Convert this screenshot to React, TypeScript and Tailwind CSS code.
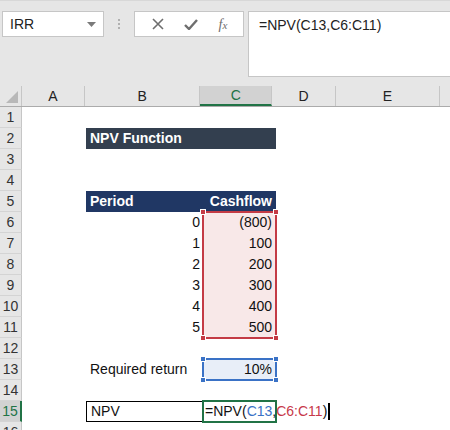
import { ReactNode } from "react";

const cols = [
    { key: "A", w: 64 },
    { key: "B", w: 117 },
    { key: "C", w: 73 },
    { key: "D", w: 64 },
    { key: "E", w: 106 },
    { key: "F", w: 10 },
];

type Cell = { text?: ReactNode; cls?: string };
type Row = { [k: string]: Cell };

const rows: Row[] = [
    {},
    {
        B: { text: "NPV Function", cls: "bg-[#333f4f] text-white font-bold pl-[4px]" },
        C: { cls: "bg-[#333f4f]" },
    },
    {},
    {},
    {
        B: { text: "Period", cls: "bg-[#203764] text-white font-bold pl-[4px]" },
        C: { text: "Cashflow", cls: "bg-[#203764] text-white font-bold justify-end pr-[4px]" },
    },
    ...["(800)", "100", "200", "300", "400", "500"].map((v, i) => ({
        B: { text: String(i), cls: "justify-end pr-[3px]" },
        C: { text: v, cls: "justify-end pr-[4px] bg-[#f8e8e8]" },
    })),
    {},
    {
        B: { text: "Required return", cls: "pl-[4px]" },
        C: { text: "10%", cls: "justify-end pr-[4px] bg-[#e8eef8]" },
    },
    {},
    {
        B: { text: "NPV", cls: "pl-[4px] border border-black" },
        C: {
            text: (
                <span className="whitespace-nowrap flex items-center">
                    =NPV(<span className="text-[#3a72c6]">C13</span>,<span className="text-[#c7394a]">C6:C11</span>)
                    <span className="inline-block w-[2px] h-[17px] bg-black ml-[1px]"></span>
                </span>
            ),
            cls: "pl-[2px] overflow-visible z-10",
        },
    },
    {},
];

function Corners({ color }: { color: string }) {
    const base = "absolute w-[6px] h-[6px] border border-white";
    return <>
        <div className={`${base} -left-[4px] -top-[4px] ${color}`}></div>
        <div className={`${base} -right-[4px] -top-[4px] ${color}`}></div>
        <div className={`${base} -left-[4px] -bottom-[4px] ${color}`}></div>
        <div className={`${base} -right-[4px] -bottom-[4px] ${color}`}></div>
    </>
}

export default function App() {
    return <div className="w-[450px] h-[430px] overflow-hidden bg-white text-[14px] text-[#111]" style={{ fontFamily: "'Liberation Sans', Arial, sans-serif" }}>
        {/* formula bar */}
        <div className="h-[86px] bg-[#e6e6e6] border-t border-[#d8d8d8] flex items-start pt-[10px] pl-[2px]">
            <div className="w-[102px] h-[26px] bg-white border border-[#c6c6c6] flex items-center justify-between pl-[7px] pr-[7px] text-[#222]">
                <span>IRR</span>
                <svg width="9" height="5" viewBox="0 0 9 5"><path d="M0 0h9L4.5 5z" fill="#7a7a7a" /></svg>
            </div>
            <div className="w-[30px] h-[26px] flex flex-col items-center justify-center gap-[2px]">
                <div className="w-[2px] h-[2px] bg-[#b0b0b0]"></div>
                <div className="w-[2px] h-[2px] bg-[#b0b0b0]"></div>
                <div className="w-[2px] h-[2px] bg-[#b0b0b0]"></div>
            </div>
            <div className="w-[110px] h-[26px] bg-white border border-[#c6c6c6] flex items-center">
                <div className="w-[40px] flex justify-center pl-[6px]">
                    <svg width="12" height="12" viewBox="0 0 12 12"><path d="M1 1l10 10M11 1L1 11" stroke="#6e6e6e" strokeWidth="1.6" /></svg>
                </div>
                <div className="w-[32px] flex justify-center">
                    <svg width="14" height="11" viewBox="0 0 14 11"><path d="M1 6l4 4 8-9" stroke="#6e6e6e" strokeWidth="2.4" fill="none" /></svg>
                </div>
                <div className="w-[32px] flex justify-center italic text-[#6e6e6e] text-[14px]" style={{ fontFamily: "'Liberation Serif', serif" }}>
                    f<span className="text-[11px] mt-[3px]">x</span>
                </div>
            </div>
            <div className="ml-[4px] flex-1 h-[66px] bg-white border border-[#c6c6c6] border-r-0 pl-[10px] pt-[3px] text-[#222]">
                =NPV(C13,C6:C11)
            </div>
        </div>

        {/* column headers */}
        <div className="flex h-[21px] bg-[#e6e6e6] border-b border-[#ababab]">
            <div className="w-[22px] h-full border-r border-[#c6c6c6] relative flex items-end justify-end p-[3px]">
                <svg width="12" height="12" viewBox="0 0 12 12"><path d="M12 0v12H0z" fill="#b8b8b8" /></svg>
            </div>
            {cols.map(c => (
                <div key={c.key} style={{ width: c.w }} className={`h-full flex items-center justify-center text-[#222] border-r ${c.key === "F" ? "border-r-0" : "border-[#c6c6c6]"} ${c.key === "C" ? "bg-[#d2d2d2] border-b-2 border-b-[#217346] text-[#217346]" : ""}`}>
                    {c.key === "F" ? "" : c.key}
                </div>
            ))}
        </div>

        {/* grid */}
        <div className="relative">
            {rows.map((r, i) => (
                <div key={i} className="flex h-[21px]">
                    <div className={`w-[22px] shrink-0 h-full flex items-center justify-center border-b border-[#d4d4d4] ${i === 14 ? "bg-[#d2d2d2] border-r-2 border-r-[#217346] text-[#217346]" : "bg-[#e6e6e6] border-r border-r-[#c6c6c6] text-[#333]"}`}>
                        {i + 1}
                    </div>
                    {cols.map(c => {
                        const cell = r[c.key] || {};
                        return <div key={c.key} style={{ width: c.w }} className={`shrink-0 h-full flex items-center ${cell.cls || ""}`}>
                            {cell.text}
                        </div>
                    })}
                </div>
            ))}

            {/* C6:C11 range highlight */}
            <div className="absolute left-[202px] top-[104px] w-[75px] h-[128px] border-2 border-[#c43b45] pointer-events-none">
                <Corners color="bg-[#c43b45]" />
            </div>
            {/* C13 range highlight */}
            <div className="absolute left-[202px] top-[251px] w-[75px] h-[23px] border-2 border-[#3a72c6] pointer-events-none">
                <Corners color="bg-[#3a72c6]" />
            </div>
            {/* active cell C15 */}
            <div className="absolute left-[202px] top-[293px] w-[75px] h-[23px] border-2 border-[#217346] pointer-events-none"></div>
        </div>
    </div>
}
